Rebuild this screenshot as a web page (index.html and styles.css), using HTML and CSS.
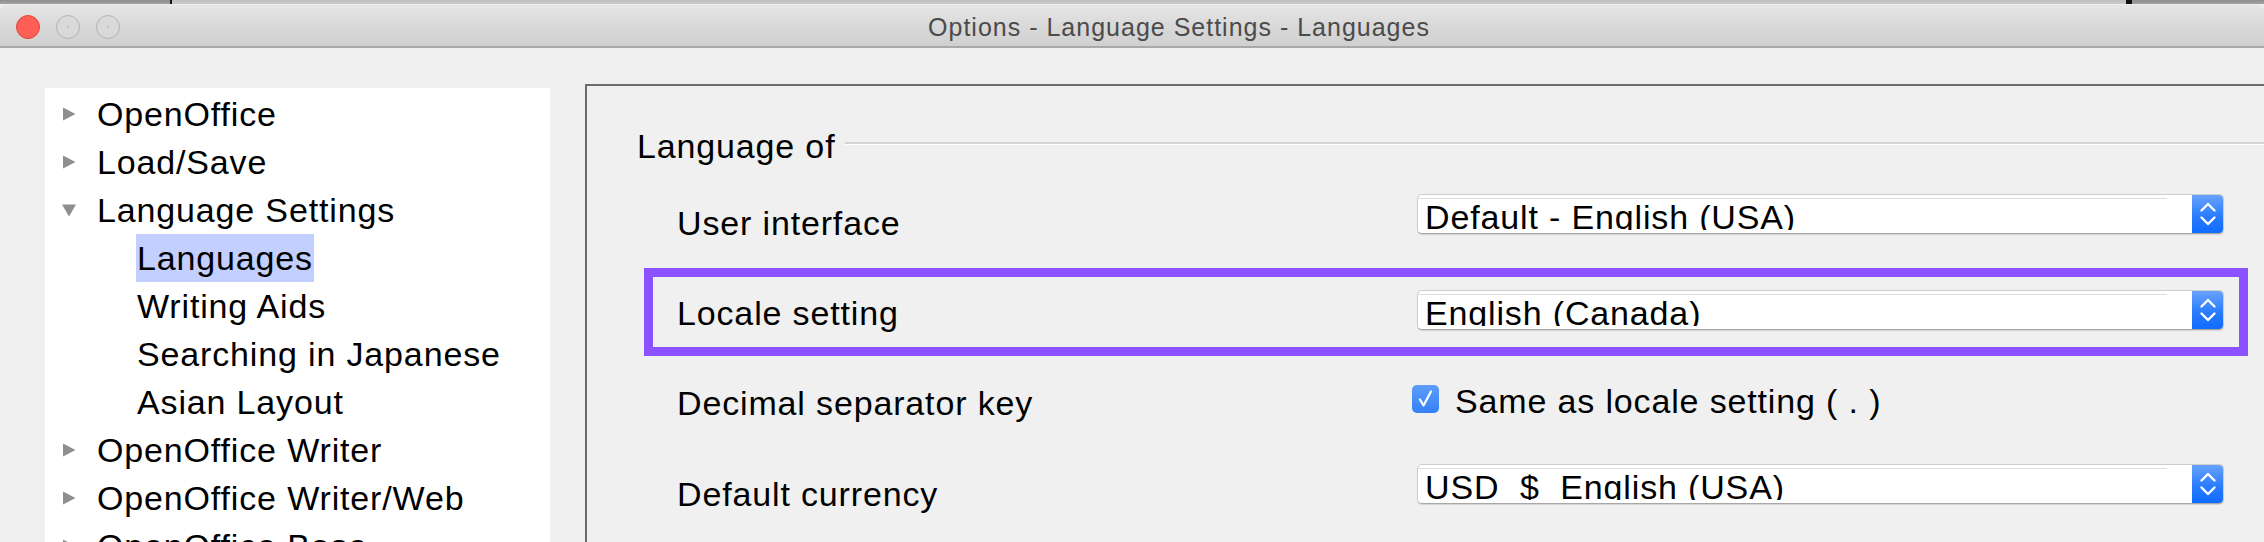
FILE: index.html
```html
<!DOCTYPE html>
<html lang="en">
<head>
    <meta charset="UTF-8">
    <meta name="viewport" content="width=device-width, initial-scale=1.0">
    <title>Options - Language Settings - Languages</title>
    <link rel="stylesheet" href="styles.css">
</head>
<body>
    <div class="desktop">
        <span class="shade dark-left"></span>
        <span class="seam"></span>
        <span class="shade pale"></span>
        <span class="seam wide"></span>
        <span class="shade dark-right"></span>
    </div>

    <div class="window">
        <div class="titlebar">
            <div class="lights">
                <span class="light close"></span>
                <span class="light"></span>
                <span class="light"></span>
            </div>
            <div class="title">Options - Language Settings - Languages</div>
        </div>

        <div class="content">
            <ul class="tree">
                <li class="node">
                    <svg class="twisty" viewBox="0 0 14 14"><path d="M1 0.5 L13.5 7 L1 13.5 Z"/></svg>
                    <span>OpenOffice</span>
                </li>
                <li class="node">
                    <svg class="twisty" viewBox="0 0 14 14"><path d="M1 0.5 L13.5 7 L1 13.5 Z"/></svg>
                    <span>Load/Save</span>
                </li>
                <li class="node">
                    <svg class="twisty" viewBox="0 0 14 14"><path d="M0 1.5 L14 1.5 L7 13.5 Z"/></svg>
                    <span>Language Settings</span>
                </li>
                <li class="node child"><span class="leaf selected">Languages</span></li>
                <li class="node child"><span class="leaf">Writing Aids</span></li>
                <li class="node child"><span class="leaf">Searching in Japanese</span></li>
                <li class="node child"><span class="leaf">Asian Layout</span></li>
                <li class="node">
                    <svg class="twisty" viewBox="0 0 14 14"><path d="M1 0.5 L13.5 7 L1 13.5 Z"/></svg>
                    <span>OpenOffice Writer</span>
                </li>
                <li class="node">
                    <svg class="twisty" viewBox="0 0 14 14"><path d="M1 0.5 L13.5 7 L1 13.5 Z"/></svg>
                    <span>OpenOffice Writer/Web</span>
                </li>
                <li class="node">
                    <svg class="twisty" viewBox="0 0 14 14"><path d="M1 0.5 L13.5 7 L1 13.5 Z"/></svg>
                    <span>OpenOffice Base</span>
                </li>
            </ul>

            <div class="page">
                <div class="group-head">
                    <span>Language of</span>
                    <div class="group-line"></div>
                </div>

                <div class="fields">
                    <div class="row row-ui">
                        <div class="field-label">User interface</div>
                        <div class="select">
                            <div class="select-value">Default - English (USA)</div>
                            <div class="stepper">
                                <svg viewBox="0 0 32 40"><path d="M9.5 16.5 L16 10 L22.5 16.5 M9.5 23.5 L16 30 L22.5 23.5"/></svg>
                            </div>
                        </div>
                    </div>

                    <div class="row row-locale">
                        <div class="field-label">Locale setting</div>
                        <div class="select">
                            <div class="select-value">English (Canada)</div>
                            <div class="stepper">
                                <svg viewBox="0 0 32 40"><path d="M9.5 16.5 L16 10 L22.5 16.5 M9.5 23.5 L16 30 L22.5 23.5"/></svg>
                            </div>
                        </div>
                    </div>

                    <div class="row row-decimal">
                        <div class="field-label">Decimal separator key</div>
                        <label class="check">
                            <span class="check-box">
                                <svg viewBox="0 0 27 28"><path d="M8 14.5 L11.5 20.5 L19 6.5"/></svg>
                            </span>
                            Same as locale setting ( . )
                        </label>
                    </div>

                    <div class="row row-currency">
                        <div class="field-label">Default currency</div>
                        <div class="select">
                            <div class="select-value">USD  $  English (USA)</div>
                            <div class="stepper">
                                <svg viewBox="0 0 32 40"><path d="M9.5 16.5 L16 10 L22.5 16.5 M9.5 23.5 L16 30 L22.5 23.5"/></svg>
                            </div>
                        </div>
                    </div>
                </div>
            </div>
        </div>
    </div>
</body>
</html>
```

FILE: styles.css
```css
body {
    margin: 0;
    height: 542px;
    overflow: hidden;
    background-color: #f0f0f0;
    font-family: "Liberation Sans", Arial, sans-serif;
    font-size: 34px;
    letter-spacing: 0.85px;
    color: #000;
}

/* strip of desktop behind the window */
.desktop {
    display: flex;
    height: 4px;
    background-color: #c6c6c6;
}
.shade {
    height: 100%;
}
.dark-left {
    width: 170px;
    background: linear-gradient(#8e8e8e, #a4a4a4);
}
.pale {
    width: 1954px;
    background: linear-gradient(#bdbdbd, #cbcbcb);
}
.dark-right {
    flex: 1;
    background: linear-gradient(#8e8e8e, #a4a4a4);
}
.seam {
    width: 2px;
    background-color: #111;
}
.seam.wide {
    width: 6px;
}

.window {
    background-color: #f0f0f0;
    border-radius: 7px 7px 0 0;
}

.titlebar {
    display: flex;
    align-items: center;
    height: 44px;
    box-sizing: border-box;
    padding-top: 2px;
    background: linear-gradient(#e6e6e6, #d9d9d9 50%, #d0d0d0);
    border-top: 1px solid #ededed;
    border-bottom: 2px solid #a9a9a9;
    border-radius: 7px 7px 0 0;
}
.lights {
    display: flex;
    flex-shrink: 0;
    gap: 16px;
    padding: 0 32px 0 16px;
}
.light {
    width: 24px;
    height: 24px;
    flex-shrink: 0;
    box-sizing: border-box;
    border-radius: 50%;
    border: 1px solid #b3b3b3;
    background: radial-gradient(circle, #c4c4c4 0 1px, #d9d9d9 1.5px);
}
.light.close {
    border-color: #e0453e;
    background: #fd5f57;
}
.title {
    flex: 1;
    padding-right: 58px;
    text-align: center;
    font-size: 25px;
    line-height: 40px;
    letter-spacing: 1px;
    color: #4b4b4b;
}

.content {
    display: flex;
    align-items: flex-start;
}

/* navigation tree */
.tree {
    list-style: none;
    width: 505px;
    min-height: 470px;
    margin: 40px 0 0 45px;
    padding: 2px 0 0;
    background-color: #fff;
}
.node {
    display: flex;
    align-items: center;
    height: 48px;
    padding-left: 17px;
    white-space: nowrap;
}
.node.child {
    padding-left: 91px;
}
.twisty {
    width: 14px;
    height: 14px;
    margin-right: 21px;
    fill: #8e8e8e;
}
.leaf {
    padding: 0 1px;
    line-height: 48px;
}
.leaf.selected {
    background-color: #c2cfff;
}

/* options page */
.page {
    flex: 1;
    margin: 36px 0 0 35px;
    padding: 36px 0 0 50px;
    border-top: 2px solid #6b6b6b;
    border-left: 2px solid #6b6b6b;
    min-height: 440px;
}
.group-head {
    display: flex;
    align-items: center;
    height: 48px;
    white-space: nowrap;
}
.group-line {
    flex: 1;
    margin: 0 0 5px 10px;
    border-top: 2px solid #d4d4d4;
    border-bottom: 1px solid #fff;
}

.fields {
    width: 1604px;
    margin: 20px 0 0 7px;
}
.row {
    display: flex;
    align-items: flex-start;
    box-sizing: border-box;
    padding-left: 33px;
    white-space: nowrap;
}
.field-label {
    width: 740px;
    flex-shrink: 0;
    line-height: 48px;
}

.row-ui {
    height: 78px;
}
.row-ui .field-label {
    margin-top: 9px;
}
.row-ui .select {
    margin-top: 4px;
}

.row-locale {
    height: 88px;
    padding-left: 24px;
    border: 9px solid #8c52ff;
}
.row-locale .field-label {
    margin-top: 12px;
}
.row-locale .select {
    margin-top: 13px;
}

.row-decimal {
    height: 98px;
}
.row-decimal .field-label {
    margin-top: 23px;
}

.row-currency {
    height: 90px;
}
.row-currency .field-label {
    margin-top: 16px;
}
.row-currency .select {
    margin-top: 10px;
}

/* popup buttons */
.select {
    position: relative;
    display: flex;
    width: 807px;
    height: 40px;
    box-sizing: border-box;
    background-color: #fff;
    border: 1px solid #cdcdcd;
    border-bottom-color: #a8a8a8;
    border-radius: 5px;
    box-shadow: 0 1px 1px rgba(0, 0, 0, 0.12);
    overflow: hidden;
}
.select::before {
    content: "";
    position: absolute;
    top: 3px;
    left: 0;
    right: 56px;
    height: 1px;
    background-color: #dedede;
}
.select-value {
    flex: 1;
    height: 35px;
    box-sizing: border-box;
    padding: 3px 0 0 7px;
    line-height: 38px;
    white-space: pre;
    overflow: hidden;
}
.stepper {
    width: 32px;
    flex-shrink: 0;
    margin: -1px -1px -1px 0;
    background: linear-gradient(#6aa4fe, #2b7cfe 55%, #0d6bfe);
}
.stepper svg {
    display: block;
    width: 32px;
    height: 40px;
    fill: none;
    stroke: #fff;
    stroke-width: 2.4;
    stroke-linecap: round;
    stroke-linejoin: round;
}

/* checkbox */
.check {
    display: flex;
    align-items: center;
    height: 48px;
    margin: 21px 0 0 -5px;
}
.check-box {
    width: 27px;
    height: 28px;
    margin: 0 16px 4px 0;
    border-radius: 5px;
    background: linear-gradient(#5d9dfb, #3580f6);
}
.check-box svg {
    display: block;
    width: 27px;
    height: 28px;
    fill: none;
    stroke: #fff;
    stroke-width: 2.2;
    stroke-linecap: round;
    stroke-linejoin: round;
}
```
